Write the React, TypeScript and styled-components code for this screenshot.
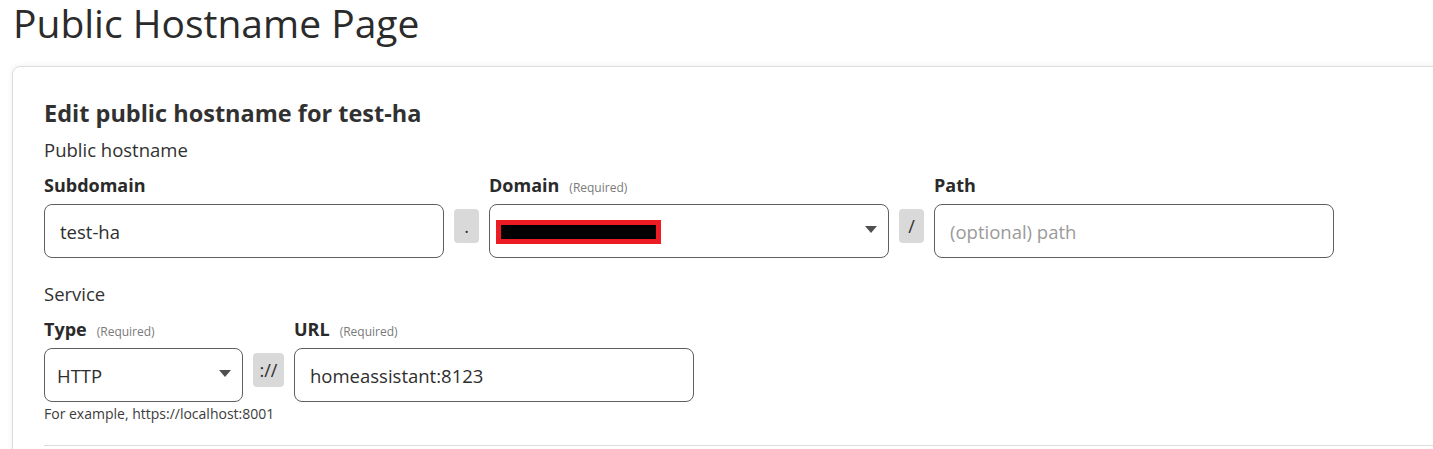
import React from "react";
import styled, { createGlobalStyle } from "styled-components";

const GlobalStyle = createGlobalStyle`
  html, body {
    margin: 0;
    padding: 0;
    background: #ffffff;
    overflow: hidden;
  }
  body {
    font-family: "Open Sans", "Noto Sans", sans-serif;
    color: #313131;
  }
  * { box-sizing: border-box; }
`;

const Page = styled.div`
  width: 1433px;
  height: 449px;
  overflow: hidden;
`;

const Title = styled.h1`
  margin: 0 0 21px 0;
  padding: 0 0 0 13px;
  font-size: 39px;
  line-height: 45px;
  font-weight: 500;
  color: #2b2b2b;
`;

const Card = styled.section`
  margin-left: 12px;
  width: 1460px;
  border: 1px solid #dcdcdc;
  border-radius: 8px 0 0 0;
  box-shadow: 0 0 6px rgba(0, 0, 0, 0.07);
  padding: 31px 0 0 31px;
  min-height: 400px;
`;

const Heading = styled.h2`
  margin: 0;
  font-size: 23.5px;
  line-height: 30px;
  font-weight: 700;
  color: #313131;
`;

const SectionLabel = styled.div<{ $top: number }>`
  margin-top: ${(p) => p.$top}px;
  font-size: 18.5px;
  line-height: 24px;
  color: #313131;
`;

const FieldGrid = styled.div<{ $cols: string }>`
  display: grid;
  grid-template-columns: ${(p) => p.$cols};
  column-gap: 10px;
  margin-top: 11px;
`;

const FieldLabel = styled.label`
  display: flex;
  align-items: baseline;
  gap: 10px;
  font-size: 18px;
  line-height: 24px;
  font-weight: 700;
  color: #2a2a2a;
  height: 31px;
`;

const Required = styled.span`
  font-size: 12px;
  font-weight: 400;
  color: #7a7a7a;
`;

const Control = styled.div`
  height: 54px;
  border: 1px solid #5f5f5f;
  border-radius: 8px;
  background: #fff;
  display: flex;
  align-items: center;
  padding: 0 15px;
  font-size: 18.5px;
  color: #2e2e2e;
  white-space: nowrap;
`;

const Placeholder = styled.span`
  color: #9a9a9a;
`;

const SelectControl = styled(Control)`
  padding: 0 11px 0 12px;
  justify-content: space-between;
`;

const Caret = styled.span`
  width: 0;
  height: 0;
  border-left: 6px solid transparent;
  border-right: 6px solid transparent;
  border-top: 7px solid #505050;
  margin-bottom: 4px;
`;

const Redacted = styled.span`
  display: block;
  width: 165px;
  height: 24px;
  margin-left: -6px;
  margin-top: 1px;
  background: #000;
  border: 5px solid #ed1c24;
`;

const Sep = styled.div`
  align-self: start;
  margin-top: 5px;
  height: 34px;
  border-radius: 4px;
  background: #d9d9d9;
  display: flex;
  align-items: center;
  justify-content: center;
  font-size: 18px;
  color: #2e2e2e;
`;

const Helper = styled.div`
  grid-column: 1 / 2;
  font-size: 14px;
  line-height: 18px;
  color: #3c3c3c;
  white-space: nowrap;
  margin-top: 3px;
`;

const Divider = styled.hr`
  margin: 22px 0 0 0;
  border: 0;
  border-top: 1px solid #dcdcdc;
`;

export default function App() {
  return (
    <Page>
      <GlobalStyle />
      <Title>Public Hostname Page</Title>
      <Card>
        <Heading>Edit public hostname for test-ha</Heading>
        <SectionLabel $top={10}>Public hostname</SectionLabel>
        <FieldGrid $cols="400px 25px 400px 25px 400px">
          <FieldLabel>Subdomain</FieldLabel>
          <div />
          <FieldLabel>
            Domain <Required>(Required)</Required>
          </FieldLabel>
          <div />
          <FieldLabel>Path</FieldLabel>
          <Control>test-ha</Control>
          <Sep>.</Sep>
          <SelectControl>
            <Redacted />
            <Caret />
          </SelectControl>
          <Sep>/</Sep>
          <Control>
            <Placeholder>(optional) path</Placeholder>
          </Control>
        </FieldGrid>
        <SectionLabel $top={24}>Service</SectionLabel>
        <FieldGrid $cols="199px 31px 400px">
          <FieldLabel>
            Type <Required>(Required)</Required>
          </FieldLabel>
          <div />
          <FieldLabel>
            URL <Required>(Required)</Required>
          </FieldLabel>
          <SelectControl>
            HTTP
            <Caret />
          </SelectControl>
          <Sep>://</Sep>
          <Control>homeassistant:8123</Control>
          <Helper>For example, https://localhost:8001</Helper>
        </FieldGrid>
        <Divider />
      </Card>
    </Page>
  );
}
